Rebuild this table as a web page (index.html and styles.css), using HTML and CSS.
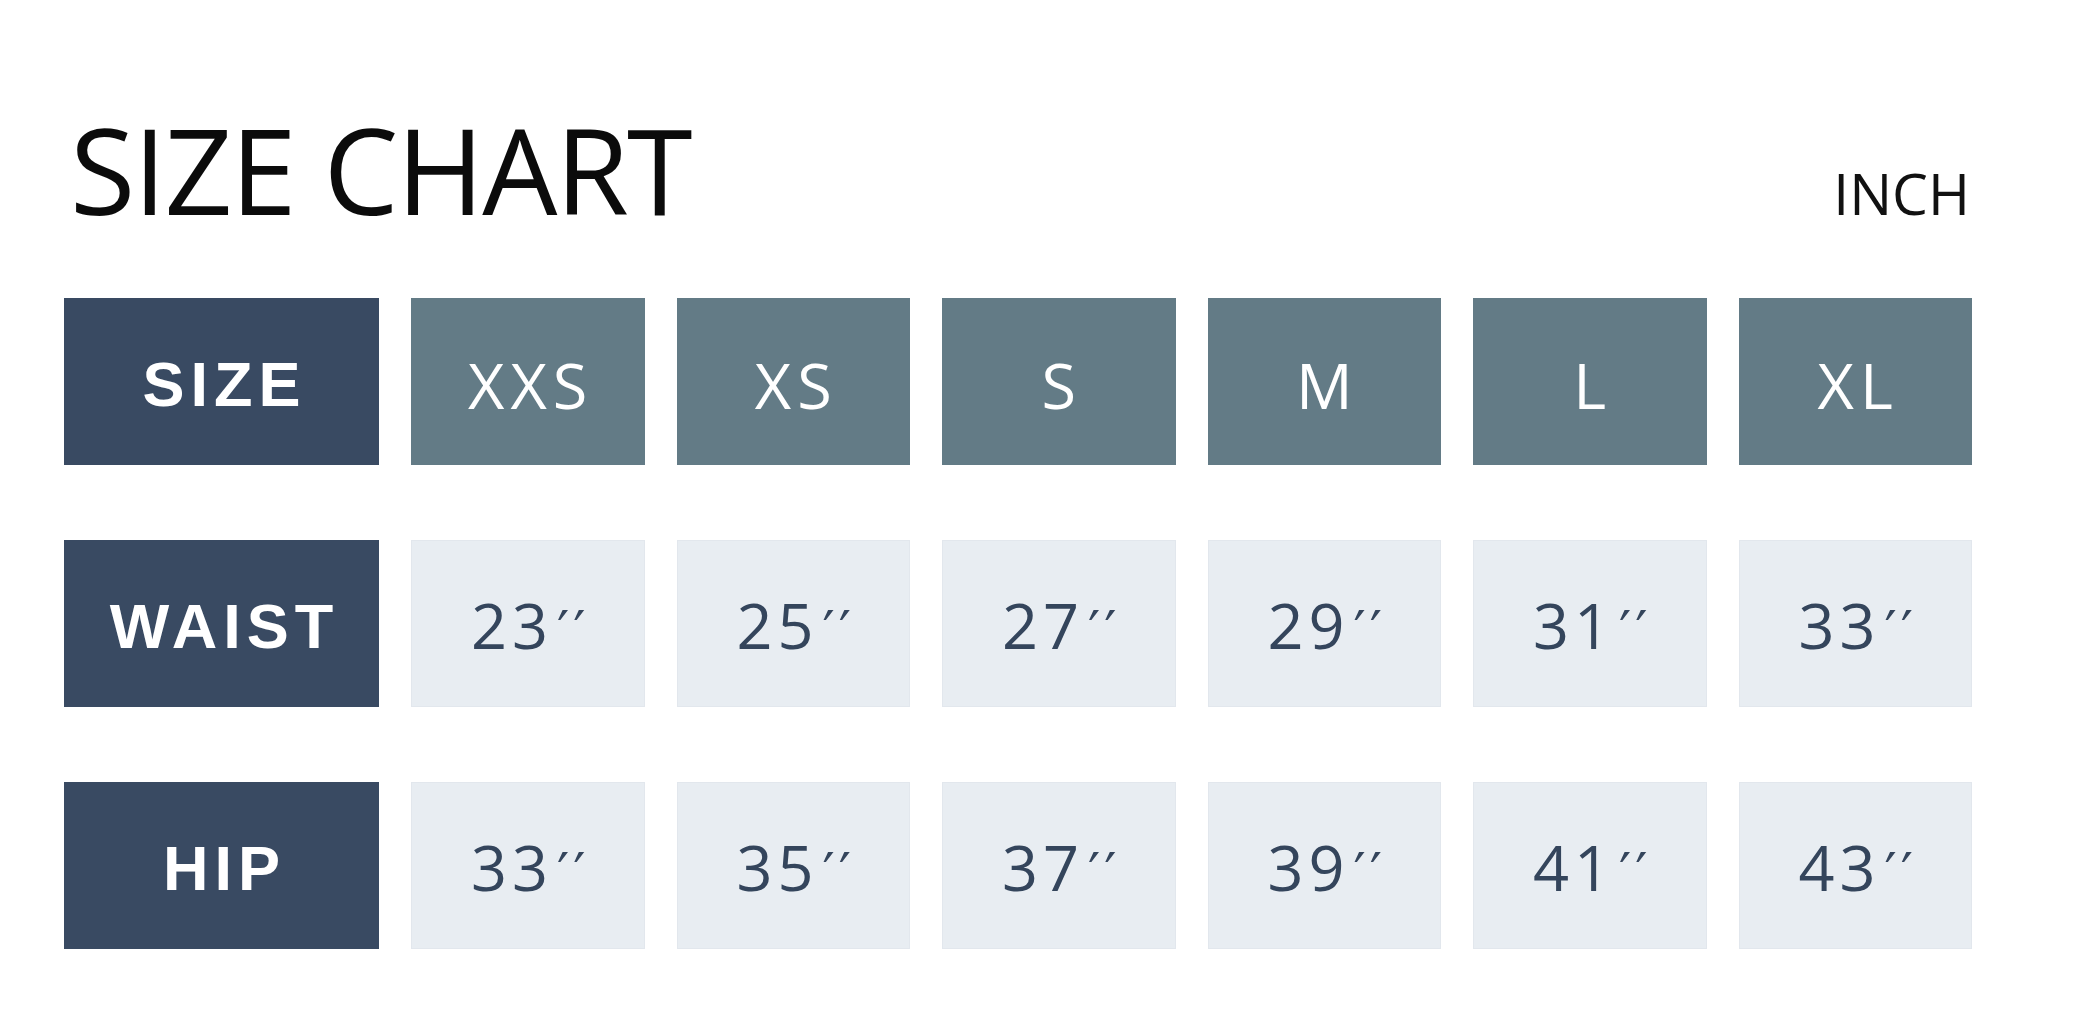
FILE: index.html
```html
<!DOCTYPE html>
<html lang="en">
<head>
<meta charset="utf-8">
<title>Size Chart</title>
<link rel="stylesheet" href="styles.css">
</head>
<body>
<main class="chart">
  <header class="chart-head">
    <h1 class="chart-title">SIZE CHART</h1>
    <span class="chart-unit">INCH</span>
  </header>
  <section class="grid">
    <div class="cell label">SIZE</div>
    <div class="cell size">XXS</div>
    <div class="cell size">XS</div>
    <div class="cell size">S</div>
    <div class="cell size">M</div>
    <div class="cell size">L</div>
    <div class="cell size">XL</div>

    <div class="cell label">WAIST</div>
    <div class="cell value"><span class="num">23<span class="prime">′′</span></span></div>
    <div class="cell value"><span class="num">25<span class="prime">′′</span></span></div>
    <div class="cell value"><span class="num">27<span class="prime">′′</span></span></div>
    <div class="cell value"><span class="num">29<span class="prime">′′</span></span></div>
    <div class="cell value"><span class="num">31<span class="prime">′′</span></span></div>
    <div class="cell value"><span class="num">33<span class="prime">′′</span></span></div>

    <div class="cell label">HIP</div>
    <div class="cell value"><span class="num">33<span class="prime">′′</span></span></div>
    <div class="cell value"><span class="num">35<span class="prime">′′</span></span></div>
    <div class="cell value"><span class="num">37<span class="prime">′′</span></span></div>
    <div class="cell value"><span class="num">39<span class="prime">′′</span></span></div>
    <div class="cell value"><span class="num">41<span class="prime">′′</span></span></div>
    <div class="cell value"><span class="num">43<span class="prime">′′</span></span></div>
  </section>
</main>
</body>
</html>
```

FILE: styles.css
```css
html, body {
  margin: 0;
  padding: 0;
  background: #ffffff;
}

.chart {
  box-sizing: border-box;
  width: 2083px;
  padding: 110px 111px 0 64px;
  font-family: "Open Sans", "Noto Sans", sans-serif;
}

.chart-head {
  display: flex;
  justify-content: space-between;
  align-items: baseline;
  height: 188px;
}

.chart-title {
  margin: 0 0 0 6px;
  font-size: 119px;
  line-height: 1;
  font-weight: 400;
  letter-spacing: -2px;
  color: #0b0b0b;
}

.chart-unit {
  font-size: 57px;
  line-height: 1;
  letter-spacing: 0;
  color: #111111;
  margin-right: 2px;
}

.grid {
  display: grid;
  grid-template-columns: 315px repeat(6, 1fr);
  grid-auto-rows: 167px;
  column-gap: 32px;
  row-gap: 75px;
}

.cell {
  display: flex;
  align-items: center;
  justify-content: center;
  box-sizing: border-box;
}

.label {
  background: #394a62;
  color: #ffffff;
  font-family: "Liberation Sans", Arial, sans-serif;
  font-weight: 700;
  font-size: 63px;
  letter-spacing: 6px;
  padding-left: 6px;
  padding-top: 4px;
}

.size {
  background: #637b86;
  color: #ffffff;
  font-size: 63px;
  letter-spacing: 6px;
  padding-left: 6px;
  padding-top: 6px;
}

.value {
  background: #e8edf2;
  border: 1px solid #e2e7ed;
  color: #34455c;
  font-size: 63px;
  letter-spacing: 5px;
  padding-left: 5px;
  padding-top: 2px;
}

.num {
  line-height: 1.2;
}

.prime {
  font-family: "DejaVu Sans", sans-serif;
  font-size: 54px;
  line-height: 1;
  letter-spacing: 4px;
  margin-left: 4px;
}
```
